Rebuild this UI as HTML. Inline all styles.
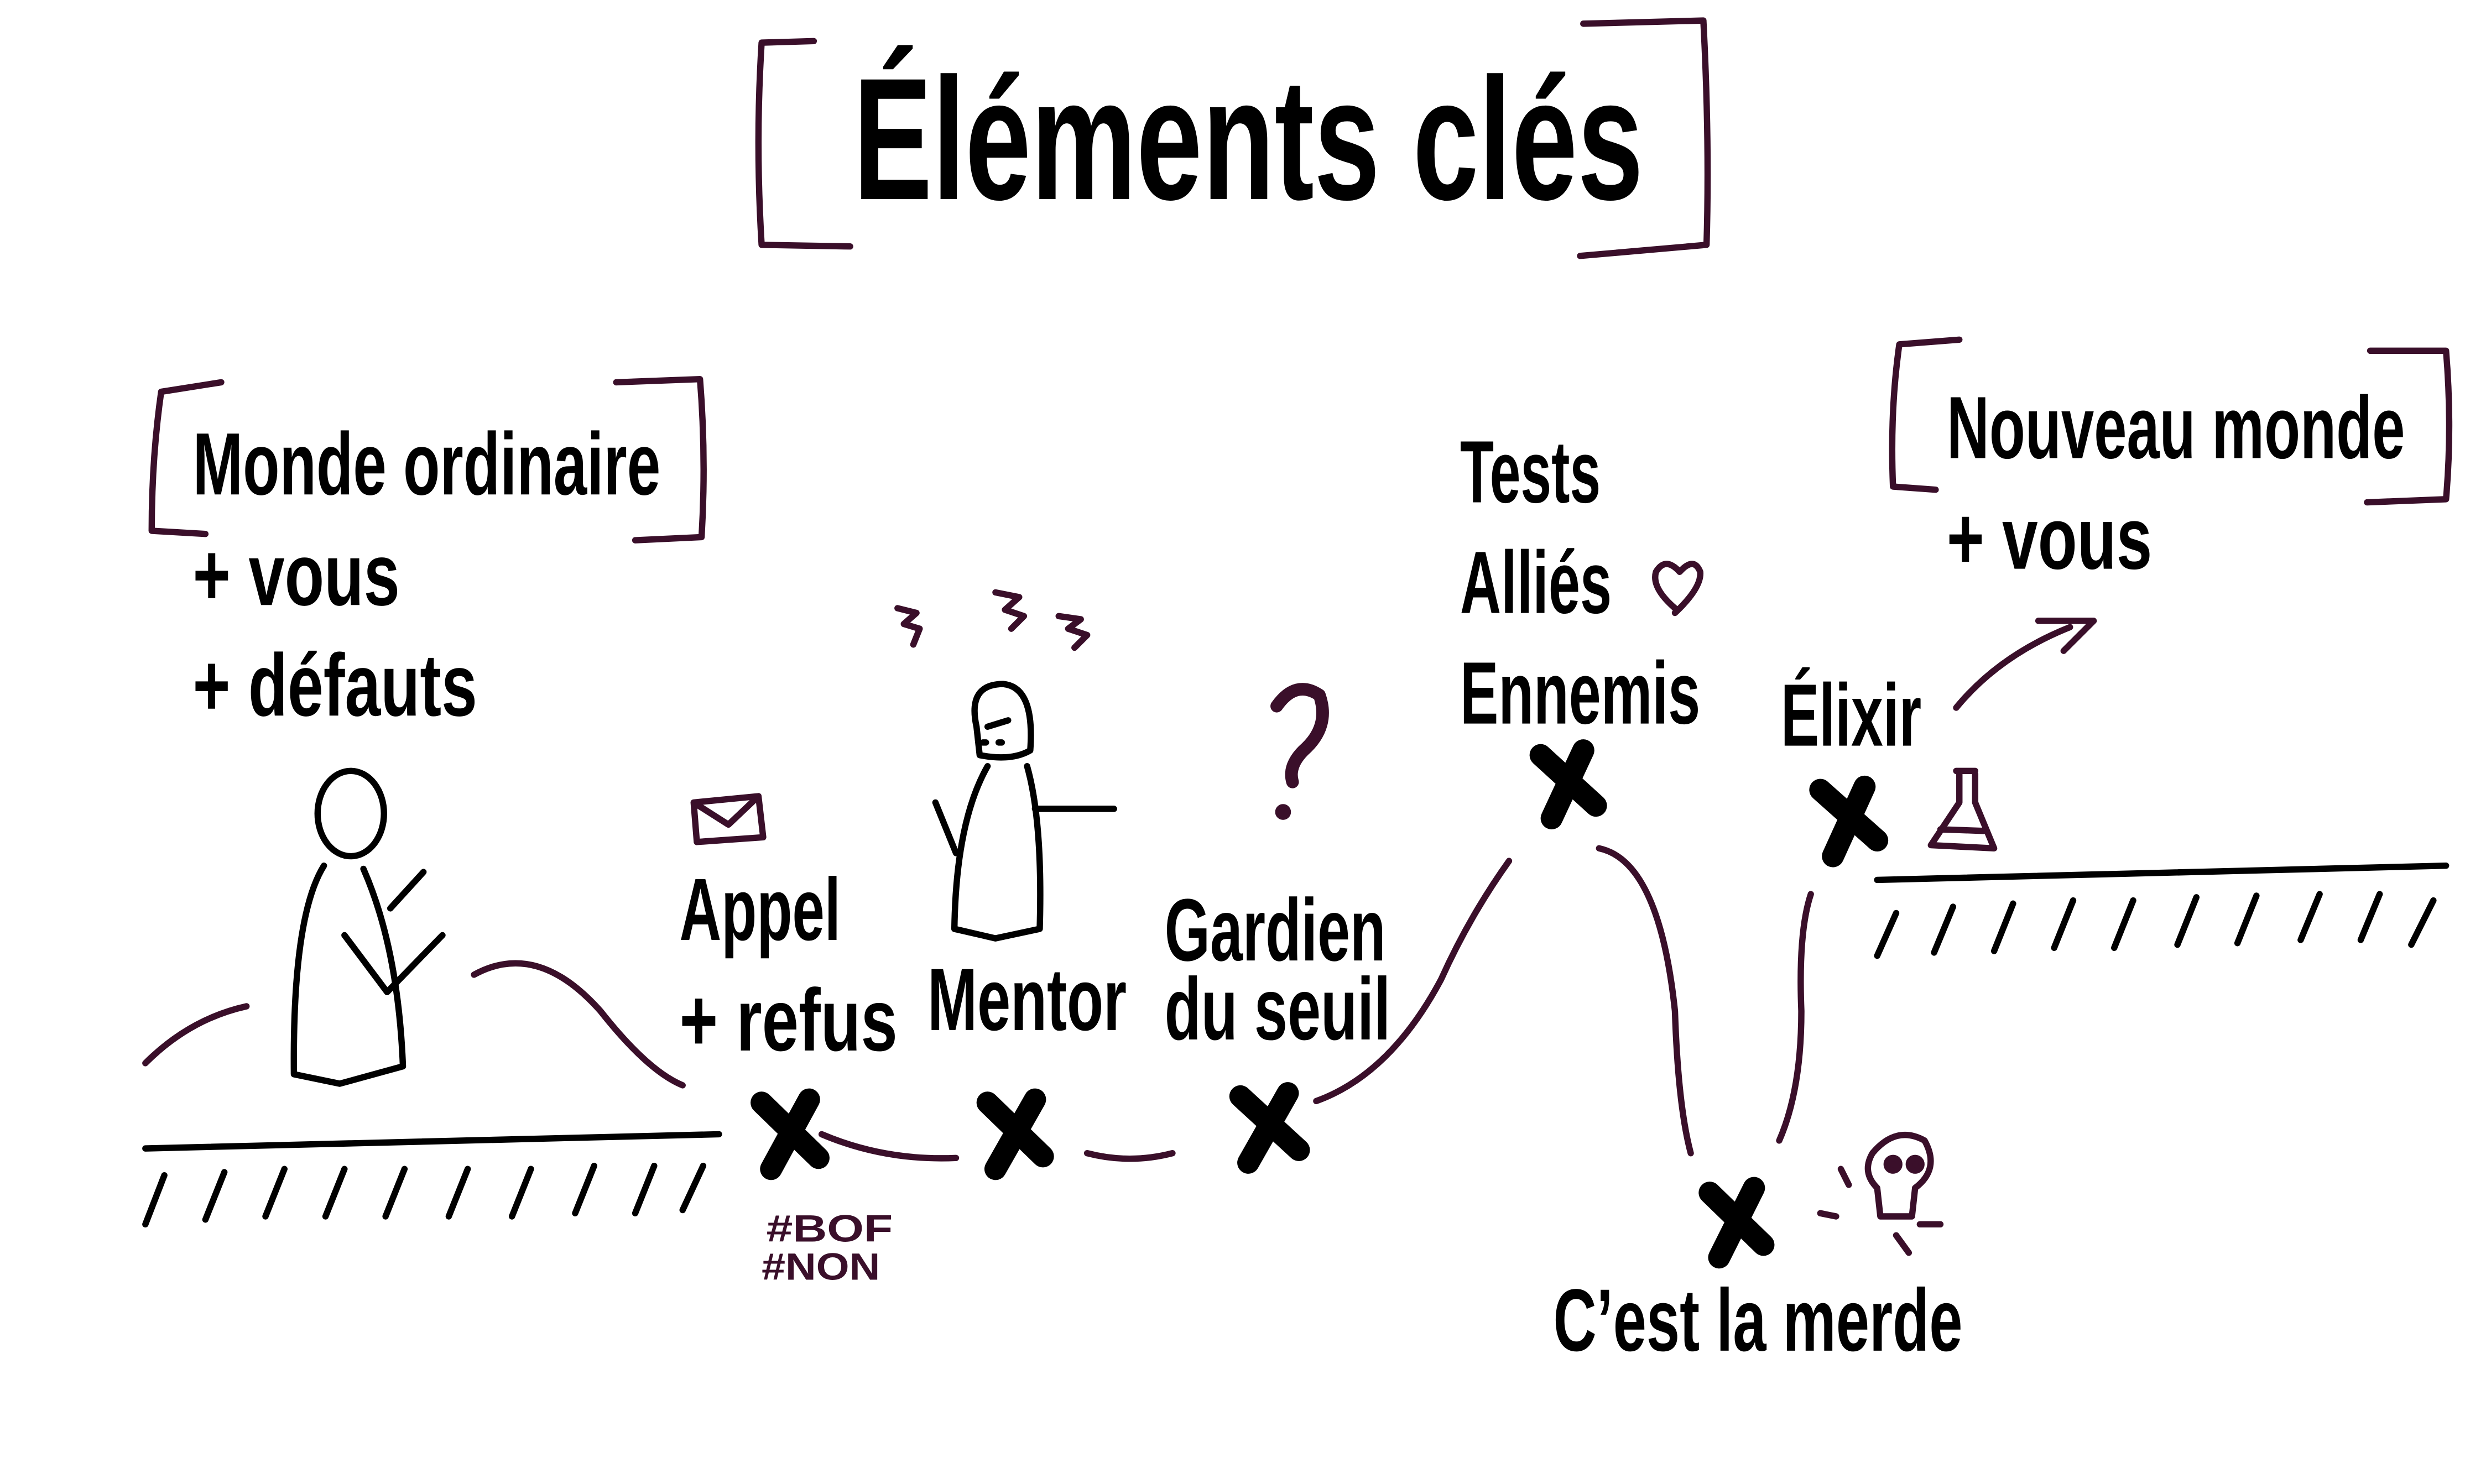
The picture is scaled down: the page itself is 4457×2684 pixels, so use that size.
<!DOCTYPE html>
<html><head><meta charset="utf-8"><style>
html,body{margin:0;padding:0;background:#fff;}
svg{display:block;}
text{font-family:"Liberation Sans Narrow","Liberation Sans",sans-serif;font-weight:bold;fill:#000;}
</style></head><body>
<svg width="4457" height="2684" viewBox="0 0 1560 939.4" preserveAspectRatio="none" xmlns="http://www.w3.org/2000/svg">
<g fill="none" stroke="#3a0f2a" stroke-width="4" stroke-linecap="round" stroke-linejoin="round">
<path d="M515 26 L482 27 Q478 90 482 155 L538 156"/>
<path d="M1002 15 L1078 13 Q1082 90 1080 155 L1000 162"/>
<path d="M140 242 L102 248 Q96 290 96 336 L130 338"/>
<path d="M390 242 L443 240 Q447 290 444 340 L402 342"/>
<path d="M1240 215 L1202 218 Q1196 260 1198 308 L1225 310"/>
<path d="M1500 222 L1548 222 Q1552 270 1548 316 L1498 318"/>
<path d="M92 673 Q120 645 156 637"/>
<path d="M300 617 Q340 595 380 640 Q410 678 432 687"/>
<path d="M520 718 Q560 735 605 733"/>
<path d="M688 730 Q715 737 742 730"/>
<path d="M833 697 Q880 680 912 620 Q930 580 955 545"/>
<path d="M1012 537 Q1050 545 1060 640 Q1062 700 1070 730"/>
<path d="M1126 722 Q1140 690 1140 640 Q1138 590 1146 566"/>
<path d="M1238 448 Q1265 415 1310 397 M1290 393 L1325 393 L1306 412"/>
<path d="M1060 385 Q1045 372 1048 362 Q1054 352 1063 362 Q1072 352 1076 362 Q1077 372 1060 388"/>
<path d="M808 447 Q820 430 835 440 Q842 460 825 475 Q815 485 818 495" stroke-width="8"/>
<circle cx="812" cy="514" r="3" fill="#3a0f2a"/>
<path d="M439 508 L480 504 L483 530 L441 533 Z M439 508 L461 522 L480 504"/>
<path d="M1238 488 L1250 488 M1240 490 L1240 508 L1222 535 L1262 537 L1250 508 L1250 490 M1228 525 L1256 526"/>
<path d="M1185 730 Q1200 712 1218 722 Q1228 740 1212 752 L1210 770 L1190 770 L1188 752 Q1178 742 1185 730"/>
<circle cx="1198" cy="737" r="4" fill="#3a0f2a"/><circle cx="1212" cy="737" r="4" fill="#3a0f2a"/>
<path d="M1165 740 L1170 750 M1152 768 L1162 770 M1215 775 L1228 775 M1200 782 L1208 793"/>
<path d="M568 385 L580 388 L572 395 L582 398 L578 408"/>
<path d="M630 375 L645 378 L636 386 L648 390 L640 398"/>
<path d="M670 390 L684 392 L676 398 L688 402 L680 410"/>
</g>
<text x="485" y="786" font-size="24" textLength="80" lengthAdjust="spacingAndGlyphs" style="fill:#3a0f2a">#BOF</text>
<text x="482" y="810" font-size="24" textLength="75" lengthAdjust="spacingAndGlyphs" style="fill:#3a0f2a">#NON</text>
<g fill="none" stroke="#000" stroke-width="4" stroke-linecap="round" stroke-linejoin="round">
<path d="M92 727 L455 718"/>
<path d="M92 775 L104 744 M130 772 L142 742 M168 770 L180 740 M206 770 L218 740 M244 770 L256 740 M284 770 L296 740 M324 770 L336 740 M364 768 L376 738 M402 768 L414 738 M432 766 L445 738"/>
<path d="M1188 557 L1548 548"/>
<path d="M1188 605 L1200 578 M1224 603 L1236 574 M1262 602 L1274 572 M1300 600 L1312 570 M1338 600 L1350 570 M1378 598 L1390 568 M1416 597 L1428 567 M1456 595 L1468 566 M1494 595 L1506 566 M1526 598 L1540 570"/>
<ellipse cx="222" cy="515" rx="21" ry="27"/>
<path d="M205 548 Q185 580 186 680 L215 686 L255 675 Q252 600 230 550"/>
<path d="M218 592 L245 628 L280 592 M247 575 L268 552"/>
<path d="M618 460 Q612 433 635 433 Q655 435 652 475 Q640 482 620 478 Z"/>
<path d="M622 470 L624 470 M632 470 L634 470 M625 460 L638 456"/>
<path d="M625 485 Q605 520 604 588 L630 594 L658 588 Q660 520 650 485"/>
<path d="M655 512 L705 512 M592 508 L605 540"/>
</g>
<g stroke="#000" stroke-width="14" stroke-linecap="round">
<path d="M482 698 L518 733 M512 696 L488 740"/>
<path d="M625 698 L660 732 M655 696 L630 740"/>
<path d="M785 694 L822 728 M815 692 L790 736"/>
<path d="M975 478 L1010 510 M1002 475 L982 518"/>
<path d="M1152 500 L1188 532 M1180 498 L1160 542"/>
<path d="M1082 755 L1116 788 M1110 752 L1088 796"/>
</g>
<g lengthAdjust="spacingAndGlyphs">
<text x="540" y="126" font-size="110" textLength="500" lengthAdjust="spacingAndGlyphs">Éléments clés</text>
<text x="122" y="313" font-size="56" textLength="296" lengthAdjust="spacingAndGlyphs">Monde ordinaire</text>
<text x="122" y="383" font-size="56" textLength="131" lengthAdjust="spacingAndGlyphs">+ vous</text>
<text x="122" y="453" font-size="56" textLength="180" lengthAdjust="spacingAndGlyphs">+ défauts</text>
<text x="430" y="595" font-size="56" textLength="102" lengthAdjust="spacingAndGlyphs">Appel</text>
<text x="430" y="665" font-size="56" textLength="138" lengthAdjust="spacingAndGlyphs">+ refus</text>
<text x="587" y="652" font-size="56" textLength="126" lengthAdjust="spacingAndGlyphs">Mentor</text>
<text x="737" y="608" font-size="56" textLength="140" lengthAdjust="spacingAndGlyphs">Gardien</text>
<text x="737" y="658" font-size="56" textLength="143" lengthAdjust="spacingAndGlyphs">du seuil</text>
<text x="924" y="318" font-size="56" textLength="89" lengthAdjust="spacingAndGlyphs">Tests</text>
<text x="924" y="388" font-size="56" textLength="96" lengthAdjust="spacingAndGlyphs">Alliés</text>
<text x="924" y="458" font-size="56" textLength="152" lengthAdjust="spacingAndGlyphs">Ennemis</text>
<text x="1127" y="472" font-size="56" textLength="89" lengthAdjust="spacingAndGlyphs">Élixir</text>
<text x="1232" y="290" font-size="56" textLength="290" lengthAdjust="spacingAndGlyphs">Nouveau monde</text>
<text x="1232" y="360" font-size="56" textLength="130" lengthAdjust="spacingAndGlyphs">+ vous</text>
<text x="983" y="855" font-size="56" textLength="259" lengthAdjust="spacingAndGlyphs">C’est la merde</text>
</g>
</svg>
</body></html>
